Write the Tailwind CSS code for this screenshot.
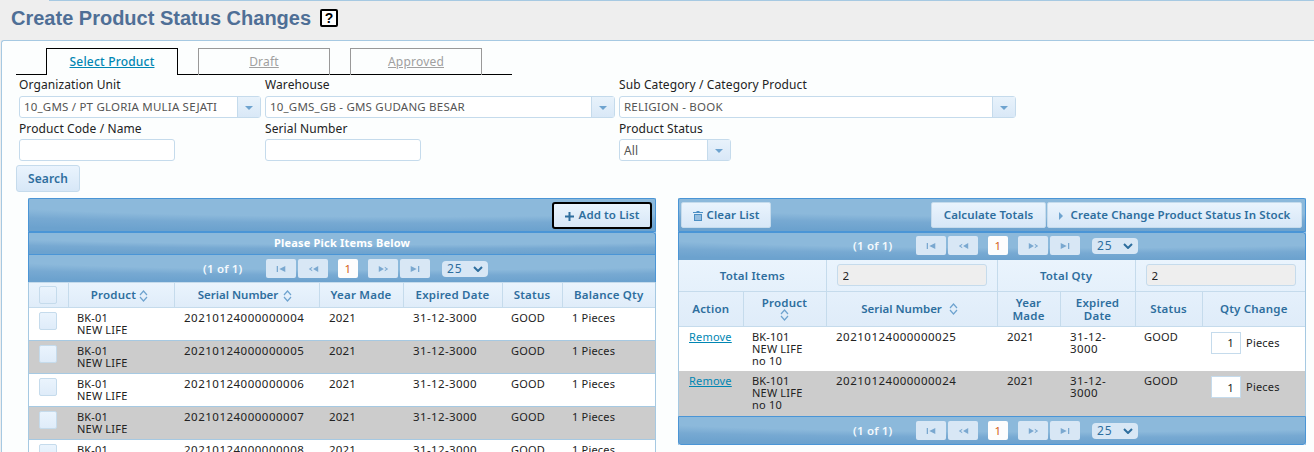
<!DOCTYPE html>
<html lang="en">
<head>
    <meta charset="UTF-8">
    <title>Create Product Status Changes</title>
    <script src="https://cdn.jsdelivr.net/npm/@tailwindcss/browser@4"></script>
</head>
<body class="h-[452px] w-[1314px] overflow-hidden bg-[#eeeeee] font-['Noto_Sans',sans-serif] text-[12px] text-[#222222]">
    <!-- page title -->
    <div class="ml-[49px] h-px bg-[#a6c9e2]"></div>
    <div class="flex h-[39px] items-start pl-[11px] pt-[5px]">
        <h1 class="font-['Liberation_Sans',sans-serif] text-[20px] leading-[24px] font-bold text-[#4f6f96]">Create Product Status Changes</h1>
        <span class="mt-[3px] ml-[9px] flex h-[18px] w-[18px] items-center justify-center rounded-[2px] border-2 border-black bg-white font-['Liberation_Sans',sans-serif] text-[14px] leading-none font-bold text-black">?</span>
    </div>

    <div class="ml-px h-[412px] overflow-hidden rounded-tl-[3px] border-t border-l border-[#a6c9e2] bg-[#fcfefe]">
        <!-- tabs -->
        <div class="mt-[8px] ml-[14px] flex h-[26px] w-[496px] items-end border-b border-black pl-[30px] tracking-[0.2px]">
            <a href="#" class="mb-[-1px] flex h-[27px] w-[132px] items-center justify-center border border-b-0 border-black bg-[#fcfefe] font-medium text-[#0086b3] underline">Select Product</a>
            <a href="#" class="mb-[-1px] ml-[20px] flex h-[27px] w-[132px] items-center justify-center border border-b-0 border-[#999999] text-[#a0a0a0] underline">Draft</a>
            <a href="#" class="mb-[-1px] ml-[20px] flex h-[27px] w-[132px] items-center justify-center border border-b-0 border-[#999999] text-[#a0a0a0] underline">Approved</a>
        </div>

        <!-- filter form -->
        <div class="ml-[17px] grid grid-cols-[246px_354px_1fr] tracking-[0.1px]">
            <div>
                <label class="block h-[21px] leading-[19px]">Organization Unit</label>
                <div class="flex h-[22px] w-[242px] rounded-[3px] border border-[#c5dbec] bg-white">
                    <span class="flex-1 truncate pl-[4px] text-[11.5px] leading-[20px] tracking-[0.2px] text-[#555555]">10_GMS / PT GLORIA MULIA SEJATI</span>
                    <span class="flex w-[23px] items-center justify-center border-l border-[#c5dbec] bg-gradient-to-b from-[#e8f2fb] to-[#d9e8f7]"><span class="mt-px h-0 w-0 border-x-[4px] border-t-[4px] border-x-transparent border-t-[#6ea3cf]"></span></span>
                </div>
            </div>
            <div>
                <label class="block h-[21px] leading-[19px]">Warehouse</label>
                <div class="flex h-[22px] w-[350px] rounded-[3px] border border-[#c5dbec] bg-white">
                    <span class="flex-1 truncate pl-[4px] text-[11.5px] leading-[20px] tracking-[0.2px] text-[#555555]">10_GMS_GB - GMS GUDANG BESAR</span>
                    <span class="flex w-[23px] items-center justify-center border-l border-[#c5dbec] bg-gradient-to-b from-[#e8f2fb] to-[#d9e8f7]"><span class="mt-px h-0 w-0 border-x-[4px] border-t-[4px] border-x-transparent border-t-[#6ea3cf]"></span></span>
                </div>
            </div>
            <div>
                <label class="block h-[21px] leading-[19px]">Sub Category / Category Product</label>
                <div class="flex h-[22px] w-[397px] rounded-[3px] border border-[#c5dbec] bg-white">
                    <span class="flex-1 truncate pl-[4px] text-[11.5px] leading-[20px] tracking-[0.2px] text-[#555555]">RELIGION - BOOK</span>
                    <span class="flex w-[23px] items-center justify-center border-l border-[#c5dbec] bg-gradient-to-b from-[#e8f2fb] to-[#d9e8f7]"><span class="mt-px h-0 w-0 border-x-[4px] border-t-[4px] border-x-transparent border-t-[#6ea3cf]"></span></span>
                </div>
            </div>
            <div>
                <label class="block h-[21px] leading-[21px]">Product Code / Name</label>
                <input type="text" class="block h-[22px] w-[156px] rounded-[3px] border border-[#c5dbec] bg-white">
            </div>
            <div>
                <label class="block h-[21px] leading-[21px]">Serial Number</label>
                <input type="text" class="block h-[22px] w-[156px] rounded-[3px] border border-[#c5dbec] bg-white">
            </div>
            <div>
                <label class="block h-[21px] leading-[21px]">Product Status</label>
                <div class="flex h-[22px] w-[112px] rounded-[3px] border border-[#c5dbec] bg-white">
                    <span class="flex-1 pl-[4px] leading-[21px] text-[#555555]">All</span>
                    <span class="flex w-[23px] items-center justify-center border-l border-[#c5dbec] bg-gradient-to-b from-[#e8f2fb] to-[#d9e8f7]"><span class="mt-px h-0 w-0 border-x-[4px] border-t-[4px] border-x-transparent border-t-[#6ea3cf]"></span></span>
                </div>
            </div>
        </div>
        <button class="mt-[4px] ml-[14px] block h-[27px] w-[64px] rounded-[3px] border border-[#c5dbec] bg-gradient-to-b from-[#eaf4fd] to-[#d7e7f7] font-semibold tracking-[0.1px] text-[#2e6e9e]">Search</button>

        <!-- two panels -->
        <div class="mt-[6px] ml-[26px] grid grid-cols-[628px_628px] gap-x-[22px] tracking-[0.2px]">
            <!-- left panel -->
            <div class="border-x border-[#a6c9e2] bg-white">
                <div class="-mx-px flex h-[34px] items-center justify-end rounded-t-[2px] border border-[#4a95d6] bg-[radial-gradient(ellipse_130%_100%_at_60%_0%,#8cb9db_55%,#77a9d2_75%,#6ca2ce_100%)] pr-[3px]">
                    <button class="flex h-[27px] w-[100px] items-center justify-center gap-[5px] rounded-[3px] border-2 border-black bg-gradient-to-b from-[#eaf4fd] to-[#d7e7f7] text-[11.5px] font-semibold tracking-[0.1px] text-[#2e6e9e]">
                        <svg class="mt-[2px] h-[9px] w-[9px]" viewBox="0 0 9 9"><path d="M3.500 0h2v3.500H9v2H5.500V9h-2V5.500H0v-2h3.500z" fill="#2e6e9e"/></svg>Add to List
                    </button>
                </div>
                <div class="-mx-px flex h-[22px] items-center justify-center rounded-tr-[3px] border-x border-t border-[#4a95d6] bg-[radial-gradient(ellipse_130%_100%_at_60%_0%,#8cb9db_55%,#77a9d2_75%,#6ca2ce_100%)] text-[11px] font-bold text-white">Please Pick Items Below</div>
                <div class="-mx-px flex h-[28px] items-center border-x border-t border-[#4a95d6] bg-[radial-gradient(ellipse_130%_100%_at_60%_0%,#8cb9db_55%,#77a9d2_75%,#6ca2ce_100%)] pl-[174px]">
                    <span class="w-[63px] text-[11.5px] font-semibold text-[#f4f9fd]">(1 of 1)</span>
                    <span class="flex h-[19px] w-[30px] items-center justify-center rounded-[2px] bg-[#d8e7f5] text-[#7aa8d0]"><svg class="h-[6px] w-[10px]" viewBox="0 0 10 7" fill="currentColor"><path d="M0 0h1.500v7H0zM10 0v7L3 3.500z"/></svg></span>
                    <span class="ml-[2px] flex h-[19px] w-[30px] items-center justify-center rounded-[2px] bg-[#d8e7f5] text-[#7aa8d0]"><svg class="h-[6px] w-[11px]" viewBox="0 0 11 7" fill="currentColor"><path d="M11 0v7L5 3.500zM4 1v1.200L2 3.500l2 1.300V6L0 3.500z"/></svg></span>
                    <span class="ml-[10px] flex h-[19px] w-[20px] items-center justify-center rounded-[2px] bg-[#fdfdfd] text-[11.5px] text-[#d4601a]">1</span>
                    <span class="ml-[10px] flex h-[19px] w-[30px] items-center justify-center rounded-[2px] bg-[#d8e7f5] text-[#7aa8d0]"><svg class="h-[6px] w-[11px]" viewBox="0 0 11 7" fill="currentColor"><path d="M0 0v7l6-3.500zM7 1v1.200L9 3.500 7 4.800V6l4-2.500z"/></svg></span>
                    <span class="ml-[2px] flex h-[19px] w-[30px] items-center justify-center rounded-[2px] bg-[#d8e7f5] text-[#7aa8d0]"><svg class="h-[6px] w-[10px]" viewBox="0 0 10 7" fill="currentColor"><path d="M10 0H8.500v7H10zM0 0v7l7-3.500z"/></svg></span>
                    <span class="ml-[12px] flex h-[16px] w-[46px] items-center justify-between rounded-[4px] bg-[#d8e7f5] pr-[5px] pl-[5px] tracking-[1px] text-[#2e6e9e]">25<svg class="h-[6px] w-[10px]" viewBox="0 0 10 6" fill="none" stroke="#2e6e9e" stroke-width="2"><path d="M1 1l4 4 4-4"/></svg></span>
                </div>
                <table class="w-[626px] table-fixed border-collapse text-[11px]">
                    <colgroup><col class="w-[39px]"><col class="w-[106px]"><col class="w-[145px]"><col class="w-[84px]"><col class="w-[99px]"><col class="w-[60px]"><col></colgroup>
                    <thead class="bg-gradient-to-b from-[#eaf4fd] to-[#dfecf9] text-[11.5px] font-semibold text-[#2e6e9e]">
                        <tr class="h-[25px] border-y border-[#c5dbec]">
                            <th class="border-r border-[#c5dbec]"><span class="mx-auto block h-[18px] w-[18px] rounded-[2px] border border-[#c5dbec] bg-gradient-to-b from-[#eaf4fd] to-[#dfecf9]"></span></th>
                            <th class="border-r border-[#c5dbec] pr-[3px] font-semibold">Product <svg class="inline h-[12px] w-[9px]" viewBox="0 0 9 12" fill="none" stroke="#6ea3cf" stroke-width="1.200"><path d="M1 5l3.500-4L8 5M1 7l3.500 4L8 7"/></svg></th>
                            <th class="border-r border-[#c5dbec] pr-[3px] font-semibold tracking-normal">Serial Number <svg class="ml-[2px] inline h-[12px] w-[9px]" viewBox="0 0 9 12" fill="none" stroke="#6ea3cf" stroke-width="1.200"><path d="M1 5l3.500-4L8 5M1 7l3.500 4L8 7"/></svg></th>
                            <th class="border-r border-[#c5dbec] font-semibold">Year Made</th>
                            <th class="border-r border-[#c5dbec] font-semibold">Expired Date</th>
                            <th class="border-r border-[#c5dbec] font-semibold">Status</th>
                            <th class="font-semibold">Balance Qty</th>
                        </tr>
                    </thead>
                    <tbody class="leading-[12px]">
                        <tr class="h-[33px] border-b border-[#a6c9e2] bg-white align-top">
                            <td class="pt-[4px] pl-[10px]"><span class="block h-[18px] w-[18px] rounded-[2px] border border-[#c5dbec] bg-gradient-to-b from-[#eaf4fd] to-[#dfecf9]"></span></td>
                            <td class="pt-[4px] pl-[9px]">BK-01<br>NEW LIFE</td><td class="pt-[4px] pl-[10px] text-[11.5px] tracking-[0.5px]">20210124000000004</td><td class="pt-[4px] pl-[10px] text-[11.5px]">2021</td><td class="pt-[4px] pl-[10px] text-[11.5px] tracking-[0.4px]">31-12-3000</td><td class="pt-[4px] pl-[9px]">GOOD</td><td class="pt-[4px] pl-[10px]">1 Pieces</td>
                        </tr>
                        <tr class="h-[33px] border-b border-[#a6c9e2] bg-[#cccccc] align-top">
                            <td class="pt-[4px] pl-[10px]"><span class="block h-[18px] w-[18px] rounded-[2px] border border-[#c5dbec] bg-gradient-to-b from-[#eaf4fd] to-[#dfecf9]"></span></td>
                            <td class="pt-[4px] pl-[9px]">BK-01<br>NEW LIFE</td><td class="pt-[4px] pl-[10px] text-[11.5px] tracking-[0.5px]">20210124000000005</td><td class="pt-[4px] pl-[10px] text-[11.5px]">2021</td><td class="pt-[4px] pl-[10px] text-[11.5px] tracking-[0.4px]">31-12-3000</td><td class="pt-[4px] pl-[9px]">GOOD</td><td class="pt-[4px] pl-[10px]">1 Pieces</td>
                        </tr>
                        <tr class="h-[33px] border-b border-[#a6c9e2] bg-white align-top">
                            <td class="pt-[4px] pl-[10px]"><span class="block h-[18px] w-[18px] rounded-[2px] border border-[#c5dbec] bg-gradient-to-b from-[#eaf4fd] to-[#dfecf9]"></span></td>
                            <td class="pt-[4px] pl-[9px]">BK-01<br>NEW LIFE</td><td class="pt-[4px] pl-[10px] text-[11.5px] tracking-[0.5px]">20210124000000006</td><td class="pt-[4px] pl-[10px] text-[11.5px]">2021</td><td class="pt-[4px] pl-[10px] text-[11.5px] tracking-[0.4px]">31-12-3000</td><td class="pt-[4px] pl-[9px]">GOOD</td><td class="pt-[4px] pl-[10px]">1 Pieces</td>
                        </tr>
                        <tr class="h-[33px] border-b border-[#a6c9e2] bg-[#cccccc] align-top">
                            <td class="pt-[4px] pl-[10px]"><span class="block h-[18px] w-[18px] rounded-[2px] border border-[#c5dbec] bg-gradient-to-b from-[#eaf4fd] to-[#dfecf9]"></span></td>
                            <td class="pt-[4px] pl-[9px]">BK-01<br>NEW LIFE</td><td class="pt-[4px] pl-[10px] text-[11.5px] tracking-[0.5px]">20210124000000007</td><td class="pt-[4px] pl-[10px] text-[11.5px]">2021</td><td class="pt-[4px] pl-[10px] text-[11.5px] tracking-[0.4px]">31-12-3000</td><td class="pt-[4px] pl-[9px]">GOOD</td><td class="pt-[4px] pl-[10px]">1 Pieces</td>
                        </tr>
                        <tr class="h-[33px] bg-white align-top">
                            <td class="pt-[4px] pl-[10px]"><span class="block h-[18px] w-[18px] rounded-[2px] border border-[#c5dbec] bg-gradient-to-b from-[#eaf4fd] to-[#dfecf9]"></span></td>
                            <td class="pt-[4px] pl-[9px]">BK-01<br>NEW LIFE</td><td class="pt-[4px] pl-[10px] text-[11.5px] tracking-[0.5px]">20210124000000008</td><td class="pt-[4px] pl-[10px] text-[11.5px]">2021</td><td class="pt-[4px] pl-[10px] text-[11.5px] tracking-[0.4px]">31-12-3000</td><td class="pt-[4px] pl-[9px]">GOOD</td><td class="pt-[4px] pl-[10px]">1 Pieces</td>
                        </tr>
                    </tbody>
                </table>
            </div>

            <!-- right panel -->
            <div class="self-start border-x border-[#a6c9e2] bg-white">
                <div class="-mx-px flex h-[34px] items-center rounded-t-[2px] border border-[#4a95d6] bg-[radial-gradient(ellipse_130%_100%_at_60%_0%,#8cb9db_55%,#77a9d2_75%,#6ca2ce_100%)] pr-[3px] pl-[2px] text-[11.5px] font-semibold tracking-[0.1px] text-[#2e6e9e]">
                    <button class="flex h-[26px] w-[90px] items-center justify-center gap-[4px] rounded-[2px] border border-[#c5dbec] bg-gradient-to-b from-[#eaf4fd] to-[#d7e7f7]">
                        <svg class="mt-[2px] h-[10px] w-[10px]" viewBox="0 0 10 10" fill="#4c8fc4"><path d="M3.500 0h3v1H10v1H0V1h3.500zM1 3h8v7H1zm1.500 1v5h1V4zm2 0v5h1V4zm2 0v5h1V4z"/></svg>Clear List
                    </button>
                    <button class="ml-auto h-[26px] w-[115px] rounded-[2px] border border-[#c5dbec] bg-gradient-to-b from-[#eaf4fd] to-[#d7e7f7]">Calculate Totals</button>
                    <button class="ml-px flex h-[26px] w-[255px] items-center justify-center gap-[8px] rounded-[2px] border border-[#c5dbec] bg-gradient-to-b from-[#eaf4fd] to-[#d7e7f7]">
                        <span class="mt-[2px] h-0 w-0 border-y-[4px] border-l-[4px] border-y-transparent border-l-[#6ea3cf]"></span>Create Change Product Status In Stock
                    </button>
                </div>
                <div class="-mx-px flex h-[28px] items-center rounded-tr-[3px] border-x border-t border-[#4a95d6] bg-[radial-gradient(ellipse_130%_100%_at_60%_0%,#8cb9db_55%,#77a9d2_75%,#6ca2ce_100%)] pb-[2px] pl-[174px]">
                    <span class="w-[63px] text-[11.5px] font-semibold text-[#f4f9fd]">(1 of 1)</span>
                    <span class="flex h-[19px] w-[30px] items-center justify-center rounded-[2px] bg-[#d8e7f5] text-[#7aa8d0]"><svg class="h-[6px] w-[10px]" viewBox="0 0 10 7" fill="currentColor"><path d="M0 0h1.500v7H0zM10 0v7L3 3.500z"/></svg></span>
                    <span class="ml-[2px] flex h-[19px] w-[30px] items-center justify-center rounded-[2px] bg-[#d8e7f5] text-[#7aa8d0]"><svg class="h-[6px] w-[11px]" viewBox="0 0 11 7" fill="currentColor"><path d="M11 0v7L5 3.500zM4 1v1.200L2 3.500l2 1.300V6L0 3.500z"/></svg></span>
                    <span class="ml-[10px] flex h-[19px] w-[20px] items-center justify-center rounded-[2px] bg-[#fdfdfd] text-[11.5px] text-[#d4601a]">1</span>
                    <span class="ml-[10px] flex h-[19px] w-[30px] items-center justify-center rounded-[2px] bg-[#d8e7f5] text-[#7aa8d0]"><svg class="h-[6px] w-[11px]" viewBox="0 0 11 7" fill="currentColor"><path d="M0 0v7l6-3.500zM7 1v1.200L9 3.500 7 4.800V6l4-2.500z"/></svg></span>
                    <span class="ml-[2px] flex h-[19px] w-[30px] items-center justify-center rounded-[2px] bg-[#d8e7f5] text-[#7aa8d0]"><svg class="h-[6px] w-[10px]" viewBox="0 0 10 7" fill="currentColor"><path d="M10 0H8.500v7H10zM0 0v7l7-3.500z"/></svg></span>
                    <span class="ml-[12px] flex h-[16px] w-[46px] items-center justify-between rounded-[4px] bg-[#d8e7f5] pr-[5px] pl-[5px] tracking-[1px] text-[#2e6e9e]">25<svg class="h-[6px] w-[10px]" viewBox="0 0 10 6" fill="none" stroke="#2e6e9e" stroke-width="2"><path d="M1 1l4 4 4-4"/></svg></span>
                </div>
                <table class="w-[626px] table-fixed border-collapse text-[11px]">
                    <colgroup><col class="w-[64px]"><col class="w-[83px]"><col class="w-[171px]"><col class="w-[63px]"><col class="w-[75px]"><col class="w-[67px]"><col></colgroup>
                    <thead class="bg-gradient-to-b from-[#eaf4fd] to-[#dfecf9] text-[11.5px] font-semibold text-[#2e6e9e]">
                        <tr class="h-[31px] border-b border-[#c5dbec]">
                            <th colspan="2" class="border-r border-[#c5dbec] font-semibold">Total Items</th>
                            <th class="border-r border-[#c5dbec] pl-[10px] text-left"><input type="text" value="2" readonly class="h-[22px] w-[150px] rounded-[3px] border border-[#c5dbec] bg-[#eeeeee] pl-[5px] font-normal text-[#222222]"></th>
                            <th colspan="2" class="border-r border-[#c5dbec] font-semibold">Total Qty</th>
                            <th colspan="2" class="pl-[10px] text-left"><input type="text" value="2" readonly class="h-[22px] w-[150px] rounded-[3px] border border-[#c5dbec] bg-[#eeeeee] pl-[5px] font-normal text-[#222222]"></th>
                        </tr>
                        <tr class="h-[35px] border-b border-[#c5dbec] leading-[13px]">
                            <th class="border-r border-[#c5dbec] font-semibold">Action</th>
                            <th class="border-r border-[#c5dbec] font-semibold">Product<svg class="mx-auto block h-[12px] w-[9px]" viewBox="0 0 9 12" fill="none" stroke="#6ea3cf" stroke-width="1.200"><path d="M1 5l3.500-4L8 5M1 7l3.500 4L8 7"/></svg></th>
                            <th class="border-r border-[#c5dbec] pr-[4px] font-semibold tracking-normal">Serial Number <svg class="ml-[4px] inline h-[12px] w-[9px]" viewBox="0 0 9 12" fill="none" stroke="#6ea3cf" stroke-width="1.200"><path d="M1 5l3.500-4L8 5M1 7l3.500 4L8 7"/></svg></th>
                            <th class="border-r border-[#c5dbec] font-semibold">Year<br>Made</th>
                            <th class="border-r border-[#c5dbec] font-semibold">Expired<br>Date</th>
                            <th class="border-r border-[#c5dbec] font-semibold">Status</th>
                            <th class="font-semibold">Qty Change</th>
                        </tr>
                    </thead>
                    <tbody class="leading-[12px]">
                        <tr class="h-[45px] bg-white align-top">
                            <td class="pt-[4px] pl-[10px]"><a href="#" class="text-[#0086b3] underline">Remove</a></td>
                            <td class="pt-[4px] pl-[9px]">BK-101<br>NEW LIFE<br>no 10</td><td class="pt-[4px] pl-[10px] text-[11.5px] tracking-[0.5px]">20210124000000025</td><td class="pt-[4px] pl-[10px] text-[11.5px]">2021</td><td class="pt-[4px] pl-[10px] text-[11.5px] tracking-[0.4px]">31-12-<br>3000</td><td class="pt-[4px] pl-[9px]">GOOD</td>
                            <td class="pt-[5px] pl-[9px]"><span class="flex items-center gap-[5px]"><input type="text" value="1" class="h-[22px] w-[30px] border border-[#c5dbec] bg-white pr-[6px] text-right text-[11.5px]">Pieces</span></td>
                        </tr>
                        <tr class="h-[45px] bg-[#cccccc] align-top">
                            <td class="pt-[4px] pl-[10px]"><a href="#" class="text-[#0086b3] underline">Remove</a></td>
                            <td class="pt-[4px] pl-[9px]">BK-101<br>NEW LIFE<br>no 10</td><td class="pt-[4px] pl-[10px] text-[11.5px] tracking-[0.5px]">20210124000000024</td><td class="pt-[4px] pl-[10px] text-[11.5px]">2021</td><td class="pt-[4px] pl-[10px] text-[11.5px] tracking-[0.4px]">31-12-<br>3000</td><td class="pt-[4px] pl-[9px]">GOOD</td>
                            <td class="pt-[5px] pl-[9px]"><span class="flex items-center gap-[5px]"><input type="text" value="1" class="h-[22px] w-[30px] border border-[#c5dbec] bg-white pr-[6px] text-right text-[11.5px]">Pieces</span></td>
                        </tr>
                    </tbody>
                </table>
                <div class="-mx-px flex h-[29px] items-center rounded-b-[3px] border border-[#4a95d6] bg-[radial-gradient(ellipse_130%_100%_at_60%_0%,#8cb9db_55%,#77a9d2_75%,#6ca2ce_100%)] pl-[174px]">
                    <span class="w-[63px] text-[11.5px] font-semibold text-[#f4f9fd]">(1 of 1)</span>
                    <span class="flex h-[19px] w-[30px] items-center justify-center rounded-[2px] bg-[#d8e7f5] text-[#7aa8d0]"><svg class="h-[6px] w-[10px]" viewBox="0 0 10 7" fill="currentColor"><path d="M0 0h1.500v7H0zM10 0v7L3 3.500z"/></svg></span>
                    <span class="ml-[2px] flex h-[19px] w-[30px] items-center justify-center rounded-[2px] bg-[#d8e7f5] text-[#7aa8d0]"><svg class="h-[6px] w-[11px]" viewBox="0 0 11 7" fill="currentColor"><path d="M11 0v7L5 3.500zM4 1v1.200L2 3.500l2 1.300V6L0 3.500z"/></svg></span>
                    <span class="ml-[10px] flex h-[19px] w-[20px] items-center justify-center rounded-[2px] bg-[#fdfdfd] text-[11.5px] text-[#d4601a]">1</span>
                    <span class="ml-[10px] flex h-[19px] w-[30px] items-center justify-center rounded-[2px] bg-[#d8e7f5] text-[#7aa8d0]"><svg class="h-[6px] w-[11px]" viewBox="0 0 11 7" fill="currentColor"><path d="M0 0v7l6-3.500zM7 1v1.200L9 3.500 7 4.800V6l4-2.500z"/></svg></span>
                    <span class="ml-[2px] flex h-[19px] w-[30px] items-center justify-center rounded-[2px] bg-[#d8e7f5] text-[#7aa8d0]"><svg class="h-[6px] w-[10px]" viewBox="0 0 10 7" fill="currentColor"><path d="M10 0H8.500v7H10zM0 0v7l7-3.500z"/></svg></span>
                    <span class="ml-[12px] flex h-[16px] w-[46px] items-center justify-between rounded-[4px] bg-[#d8e7f5] pr-[5px] pl-[5px] tracking-[1px] text-[#2e6e9e]">25<svg class="h-[6px] w-[10px]" viewBox="0 0 10 6" fill="none" stroke="#2e6e9e" stroke-width="2"><path d="M1 1l4 4 4-4"/></svg></span>
                </div>
            </div>
        </div>
    </div>
</body>
</html>
